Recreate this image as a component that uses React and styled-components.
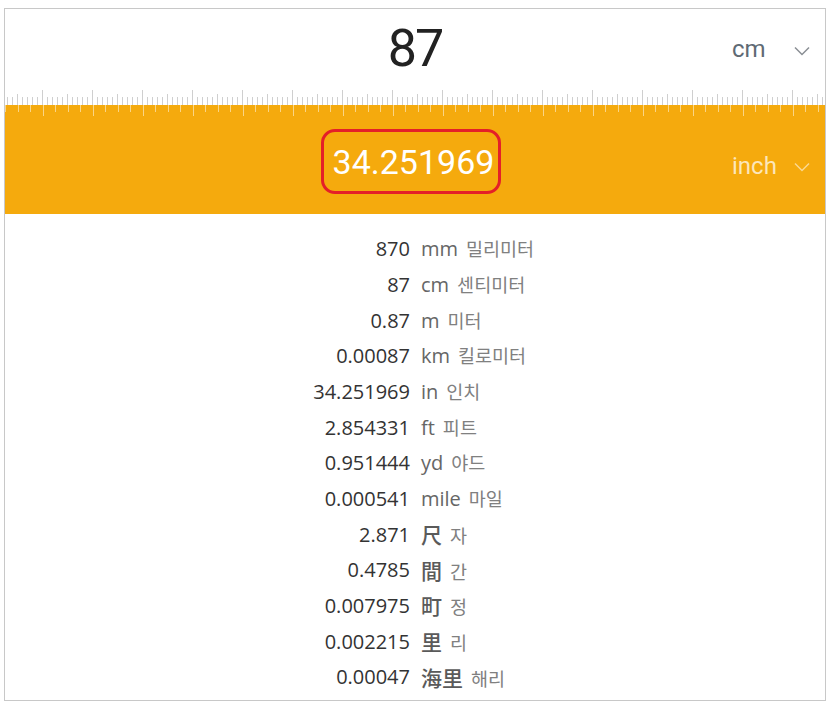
import React from "react";
import styled, { createGlobalStyle } from "styled-components";

const conversions = [
  { value: "870", unit: "mm", name: "밀리미터" },
  { value: "87", unit: "cm", name: "센티미터" },
  { value: "0.87", unit: "m", name: "미터" },
  { value: "0.00087", unit: "km", name: "킬로미터" },
  { value: "34.251969", unit: "in", name: "인치" },
  { value: "2.854331", unit: "ft", name: "피트" },
  { value: "0.951444", unit: "yd", name: "야드" },
  { value: "0.000541", unit: "mile", name: "마일" },
  { value: "2.871", unit: "尺", name: "자", cjk: true },
  { value: "0.4785", unit: "間", name: "간", cjk: true },
  { value: "0.007975", unit: "町", name: "정", cjk: true },
  { value: "0.002215", unit: "里", name: "리", cjk: true },
  { value: "0.00047", unit: "海里", name: "해리", cjk: true },
];

const Chevron = ({ color }) => (
  <svg width="16" height="10" viewBox="0 0 16 10">
    <path d="M1 1.5 L8 8.5 L15 1.5" fill="none" stroke={color} strokeWidth="1.5" />
  </svg>
);

// grey ticks above the orange band: small every 5px, medium/tall every 25px
const RulerTicks = () => {
  const lines = [];
  for (let k = 0; k < 164; k++) {
    const x = 2.5 + k * 5;
    const m = k % 10;
    const top = m === 7 ? 1 : m === 2 ? 5 : 8;
    lines.push(<line key={k} x1={x} x2={x} y1={top} y2={16} stroke="#cfcfcf" strokeWidth="1" />);
  }
  return (
    <RulerSvg width="820" height="16">
      {lines}
    </RulerSvg>
  );
};

// lighter ticks running into the orange band
const BandTicks = () => {
  const lines = [];
  for (let k = 0; k < 67; k++) {
    const x = Math.round(k * 12.5) + 0.5;
    const bottom = k % 4 === 3 ? 11 : 7;
    lines.push(
      <line key={k} x1={x} x2={x} y1={0} y2={bottom} stroke="rgba(255,255,255,0.5)" strokeWidth="1" />
    );
  }
  return (
    <RulerSvg width="820" height="12">
      {lines}
    </RulerSvg>
  );
};

const App = () => {
  return (
    <>
      <GlobalStyle />
      <Card>
        {/* source value */}
        <InputRow>
          <span />
          <BigValue>87</BigValue>
          <UnitSelect $color="#5f6a74">
            cm
            <Chevron color="#8a8f94" />
          </UnitSelect>
        </InputRow>
        <RulerTicks />
        {/* converted value */}
        <Band>
          <BandTicks />
          <InputRow $band>
            <span />
            <Highlight>
              <ResultValue>34.251969</ResultValue>
            </Highlight>
            <UnitSelect $color="rgba(255,255,255,0.72)">
              inch
              <Chevron color="rgba(255,255,255,0.55)" />
            </UnitSelect>
          </InputRow>
        </Band>
        {/* all units */}
        <List>
          {conversions.map((c) => (
            <React.Fragment key={c.unit}>
              <Num>{c.value}</Num>
              <UnitLine>
                <Abbr $cjk={c.cjk}>{c.unit}</Abbr>
                <KoName>{c.name}</KoName>
              </UnitLine>
            </React.Fragment>
          ))}
        </List>
      </Card>
    </>
  );
};

const GlobalStyle = createGlobalStyle`
  body {
    margin: 0;
    padding: 8px 0 0 4px;
    background: #fff;
    font-family: "Open Sans", "Noto Sans CJK KR", sans-serif;
  }
`;

const Card = styled.div`
  width: 820px;
  height: 691px;
  border: 1px solid #c8c8c8;
  display: flex;
  flex-direction: column;
`;

const InputRow = styled.div`
  display: grid;
  grid-template-columns: 1fr auto 1fr;
  align-items: center;
  height: ${(p) => (p.$band ? "97px" : "80px")};
  font-family: Roboto, "Liberation Sans", sans-serif;
`;

const BigValue = styled.div`
  font-size: 52px;
  color: #222;
  line-height: 1;
  letter-spacing: -2px;
`;

const UnitSelect = styled.div`
  justify-self: end;
  width: 78px;
  margin-right: 15px;
  display: flex;
  align-items: center;
  justify-content: space-between;
  font-size: 24px;
  color: ${(p) => p.$color};
  svg {
    margin-top: 3px;
  }
`;

const RulerSvg = styled.svg`
  display: block;
  flex-shrink: 0;
`;

const Band = styled.div`
  background: #f5aa0d;
  height: 109px;
  display: flex;
  flex-direction: column;
`;

const Highlight = styled.div`
  box-sizing: border-box;
  height: 65px;
  margin-top: -8px;
  padding: 0 4px 0 9px;
  border: 3px solid #e41f28;
  border-radius: 14px;
  display: flex;
  align-items: center;
  transform: translateX(-4px);
`;

const ResultValue = styled.span`
  font-size: 34px;
  color: #fff;
  line-height: 1;
`;

const List = styled.div`
  display: grid;
  grid-template-columns: 405px 1fr;
  grid-auto-rows: 35.67px;
  column-gap: 11px;
  align-items: center;
  padding-top: 17px;
`;

const Num = styled.div`
  text-align: right;
  font-size: 20px;
  color: #333;
`;

const UnitLine = styled.div`
  display: flex;
  align-items: baseline;
  gap: 8px;
`;

const Abbr = styled.span`
  font-size: ${(p) => (p.$cjk ? "21px" : "20px")};
  font-weight: ${(p) => (p.$cjk ? 500 : 400)};
  color: ${(p) => (p.$cjk ? "#5a5a5a" : "#666")};
  font-family: ${(p) => (p.$cjk ? '"Noto Sans CJK KR", sans-serif' : "inherit")};
`;

const KoName = styled.span`
  font-size: 18.5px;
  color: #808080;
  font-family: "Noto Sans CJK KR", sans-serif;
`;

export default App;
